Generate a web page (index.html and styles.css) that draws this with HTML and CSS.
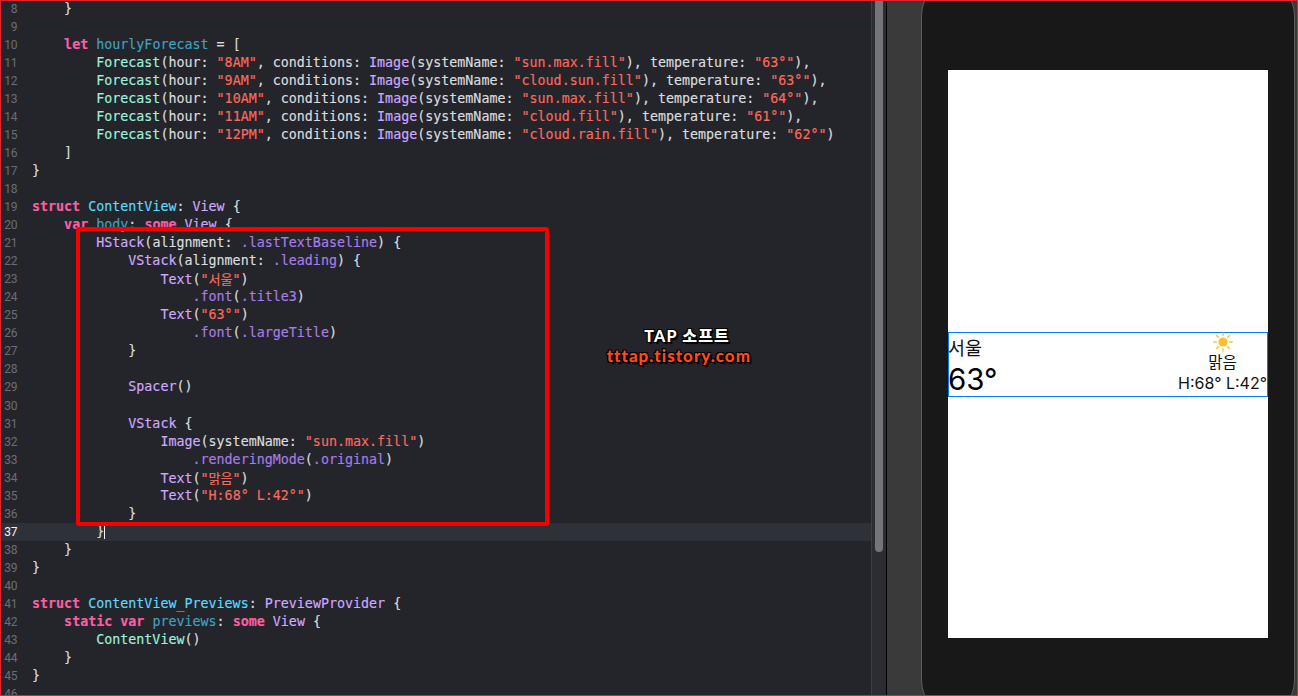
FILE: index.html
```html
<!DOCTYPE html>
<html lang="ko">
<head>
<meta charset="utf-8">
<title>ContentView.swift</title>
<link rel="stylesheet" href="styles.css">
</head>
<body>
<div class="window">
  <main class="editor">
    <div class="lines">
      <div class="line"><span class="num">8</span><code class="code">    }</code></div>
      <div class="line"><span class="num">9</span><code class="code"></code></div>
      <div class="line"><span class="num">10</span><code class="code">    <b class="k">let</b> <span class="v">hourlyForecast</span> = [</code></div>
      <div class="line"><span class="num">11</span><code class="code">        <span class="f">Forecast</span>(hour: <span class="s">"8AM"</span>, conditions: <span class="t">Image</span>(systemName: <span class="s">"sun.max.fill"</span>), temperature: <span class="s">"63°"</span>),</code></div>
      <div class="line"><span class="num">12</span><code class="code">        <span class="f">Forecast</span>(hour: <span class="s">"9AM"</span>, conditions: <span class="t">Image</span>(systemName: <span class="s">"cloud.sun.fill"</span>), temperature: <span class="s">"63°"</span>),</code></div>
      <div class="line"><span class="num">13</span><code class="code">        <span class="f">Forecast</span>(hour: <span class="s">"10AM"</span>, conditions: <span class="t">Image</span>(systemName: <span class="s">"sun.max.fill"</span>), temperature: <span class="s">"64°"</span>),</code></div>
      <div class="line"><span class="num">14</span><code class="code">        <span class="f">Forecast</span>(hour: <span class="s">"11AM"</span>, conditions: <span class="t">Image</span>(systemName: <span class="s">"cloud.fill"</span>), temperature: <span class="s">"61°"</span>),</code></div>
      <div class="line"><span class="num">15</span><code class="code">        <span class="f">Forecast</span>(hour: <span class="s">"12PM"</span>, conditions: <span class="t">Image</span>(systemName: <span class="s">"cloud.rain.fill"</span>), temperature: <span class="s">"62°"</span>)</code></div>
      <div class="line"><span class="num">16</span><code class="code">    ]</code></div>
      <div class="line"><span class="num">17</span><code class="code">}</code></div>
      <div class="line"><span class="num">18</span><code class="code"></code></div>
      <div class="line"><span class="num">19</span><code class="code"><b class="k">struct</b> <span class="c">ContentView</span>: <span class="t">View</span> {</code></div>
      <div class="line"><span class="num">20</span><code class="code">    <b class="k">var</b> <span class="v">body</span>: <b class="k">some</b> <span class="t">View</span> {</code></div>
      <div class="line"><span class="num">21</span><code class="code">        <span class="t">HStack</span>(alignment: <span class="m">.lastTextBaseline</span>) {</code></div>
      <div class="line"><span class="num">22</span><code class="code">            <span class="t">VStack</span>(alignment: <span class="m">.leading</span>) {</code></div>
      <div class="line"><span class="num">23</span><code class="code">                <span class="t">Text</span>(<span class="s">"<span class="ko">서울</span>"</span>)</code></div>
      <div class="line"><span class="num">24</span><code class="code">                    <span class="m">.font</span>(<span class="m">.title3</span>)</code></div>
      <div class="line"><span class="num">25</span><code class="code">                <span class="t">Text</span>(<span class="s">"63°"</span>)</code></div>
      <div class="line"><span class="num">26</span><code class="code">                    <span class="m">.font</span>(<span class="m">.largeTitle</span>)</code></div>
      <div class="line"><span class="num">27</span><code class="code">            }</code></div>
      <div class="line"><span class="num">28</span><code class="code"></code></div>
      <div class="line"><span class="num">29</span><code class="code">            <span class="t">Spacer</span>()</code></div>
      <div class="line"><span class="num">30</span><code class="code"></code></div>
      <div class="line"><span class="num">31</span><code class="code">            <span class="t">VStack</span> {</code></div>
      <div class="line"><span class="num">32</span><code class="code">                <span class="t">Image</span>(systemName: <span class="s">"sun.max.fill"</span>)</code></div>
      <div class="line"><span class="num">33</span><code class="code">                    <span class="m">.renderingMode</span>(<span class="m">.original</span>)</code></div>
      <div class="line"><span class="num">34</span><code class="code">                <span class="t">Text</span>(<span class="s">"<span class="ko">맑음</span>"</span>)</code></div>
      <div class="line"><span class="num">35</span><code class="code">                <span class="t">Text</span>(<span class="s">"H:68° L:42°"</span>)</code></div>
      <div class="line"><span class="num">36</span><code class="code">            }</code></div>
      <div class="line current"><span class="num">37</span><code class="code">        }<span class="caret"></span></code></div>
      <div class="line"><span class="num">38</span><code class="code">    }</code></div>
      <div class="line"><span class="num">39</span><code class="code">}</code></div>
      <div class="line"><span class="num">40</span><code class="code"></code></div>
      <div class="line"><span class="num">41</span><code class="code"><b class="k">struct</b> <span class="c">ContentView_Previews</span>: <span class="t">PreviewProvider</span> {</code></div>
      <div class="line"><span class="num">42</span><code class="code">    <b class="k">static</b> <b class="k">var</b> <span class="v">previews</span>: <b class="k">some</b> <span class="t">View</span> {</code></div>
      <div class="line"><span class="num">43</span><code class="code">        <span class="f">ContentView</span>()</code></div>
      <div class="line"><span class="num">44</span><code class="code">    }</code></div>
      <div class="line"><span class="num">45</span><code class="code">}</code></div>
      <div class="line"><span class="num">46</span><code class="code"></code></div>
    </div>
  </main>
  <div class="scrollbar"><div class="thumb"></div></div>
  <aside class="preview">
    <div class="phone">
      <div class="screen">
        <div class="weather">
          <div class="place">
            <div class="city">서울</div>
            <div class="temp">63°</div>
          </div>
          <div class="today">
            <svg class="sun" width="20" height="20" viewBox="0 0 20 20" aria-hidden="true">
              <circle cx="10" cy="10" r="4.6"/>
              <path d="M10 .8v2.6M10 16.6v2.6M.8 10h2.6M16.6 10h2.6M3.5 3.5l1.8 1.8M14.7 14.7l1.8 1.8M3.5 16.5l1.8-1.8M14.7 5.3l1.8-1.8"/>
            </svg>
            <div class="sky">맑음</div>
            <div class="range">H:68° L:42°</div>
          </div>
        </div>
      </div>
    </div>
  </aside>
  <div class="callout"></div>
  <div class="mark">
    <div class="mark-name">TAP 소프트</div>
    <div class="mark-url">tttap.tistory.com</div>
  </div>
</div>
</body>
</html>
```

FILE: styles.css
```css
* { box-sizing: border-box; }
html, body { margin: 0; padding: 0; background: #24252b; }

.window {
  position: relative;
  display: flex;
  width: 1298px;
  height: 696px;
  overflow: hidden;
  border: 1px solid #e8202c;
  background: #24252b;
}

.editor { width: 870px; flex: none; overflow: hidden; }
.lines { margin-top: -1.5px; }
.line { display: flex; height: 18.05px; line-height: 18.05px; }
.line.current { background: #2e3138; }
.num {
  width: 16px;
  flex: none;
  text-align: right;
  font: 12px/18.05px Roboto, "Liberation Sans", sans-serif;
  letter-spacing: -.4px;
  color: #6c6d72;
}
.current .num { color: #f4f4f4; }
.code {
  margin-left: 15px;
  white-space: pre;
  font-family: "DejaVu Sans Mono", "Noto Sans CJK KR", monospace;
  font-size: 13.34px;
  color: #dcdcde;
  -webkit-text-stroke: .15px;
}
.code b { font-weight: 700; }
.k { color: #fc5fa3; }
.t { color: #d0a8ff; }
.f { color: #9ef1dd; }
.s { color: #fc6a5d; }
.v { color: #41a1c0; }
.c { color: #5dd8ff; }
.m { color: #a97ce8; }
.ko { font-family: "Noto Sans CJK KR", sans-serif; font-size: 13px; }
.caret {
  display: inline-block;
  width: 1px;
  height: 15px;
  background: #f4f4f4;
  vertical-align: -3px;
}

.scrollbar {
  width: 15px;
  flex: none;
  padding: 0 3px 0 3px;
  background: #2c2d33;
  border-left: 1px solid #3e3f45;
}
.thumb {
  width: 8px;
  height: 551px;
  border-radius: 0 0 4px 4px;
  background: #74757a;
}

.preview {
  flex: 1;
  min-width: 0;
  padding-left: 34px;
  border-left: 1px solid #000;
  background: #3a3a3a;
}
.phone {
  width: 374px;
  height: 744px;
  margin-top: -25px;
  padding: 93px 26px 0 26px;
  border: 1px solid #5c5c5c;
  border-radius: 40px;
  background: #181818;
}
.screen {
  width: 320px;
  height: 568px;
  padding-top: 262px;
  background: #fff;
}

.weather {
  display: flex;
  justify-content: space-between;
  height: 65px;
  border: 1px solid #007aff;
  color: #111;
  font-family: Inter, "Noto Sans CJK KR", sans-serif;
}
.place { display: flex; flex-direction: column; margin-left: -1px; }
.city {
  height: 28px;
  font: 18.5px/28px "Noto Sans CJK KR", sans-serif;
}
.temp { font-size: 29.5px; line-height: 36px; color: #000; }
.today {
  display: flex;
  flex-direction: column;
  align-items: center;
}
.sun { fill: #fdbf2d; stroke: none; margin-top: -1px; }
.sun path { fill: none; stroke: #fdbf2d; stroke-width: 1.3; stroke-linecap: round; }
.sky { height: 21px; margin-top: -1px; font: 15.5px/21px "Noto Sans CJK KR", sans-serif; }
.range { margin-top: 1px; font-size: 16px; line-height: 20px; white-space: nowrap; }

.callout {
  position: absolute;
  left: 75px;
  top: 226px;
  width: 473px;
  height: 299px;
  border: 4px solid #f60000;
  border-radius: 3px;
}
.mark {
  position: absolute;
  left: 590px;
  top: 325px;
  width: 160px;
  text-align: right;
  font-family: Lato, "Noto Sans CJK KR", sans-serif;
  font-weight: 900;
  text-shadow: 1px 1px 0 #000, -1px 1px 0 #000, 1px -1px 0 #000, -1px -1px 0 #000, 2px 2px 1px #000;
}
.mark-name { height: 20px; padding-right: 21px; font-size: 16px; line-height: 20px; letter-spacing: 1.2px; color: #fff; }
.mark-url { height: 20px; font-size: 17px; line-height: 20px; letter-spacing: 1px; color: #ff4a20; }
```
